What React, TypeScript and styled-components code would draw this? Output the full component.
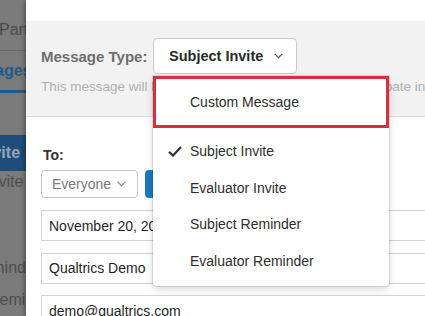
import React from "react";
import styled, { createGlobalStyle } from "styled-components";

const GlobalStyle = createGlobalStyle`
  html, body { margin: 0; padding: 0; background: #fff; overflow: hidden; }
  body { font-family: "Liberation Sans", Arial, sans-serif; }
  * { box-sizing: border-box; }
`;

const Page = styled.div`
  display: flex;
  width: 425px;
  height: 316px;
  overflow: hidden;
`;

/* ---------- dimmed page behind the modal ---------- */
const Backdrop = styled.aside`
  width: 26px;
  flex-shrink: 0;
  background: #7b7b7b;
  overflow: hidden;
  display: flex;
  flex-direction: column;
`;

const BackRow = styled.div<{ $h: number; $bg?: string; $line?: string; $pt?: number }>`
  height: ${(p) => p.$h}px;
  flex-shrink: 0;
  display: flex;
  align-items: center;
  padding-top: ${(p) => p.$pt ?? 0}px;
  background: ${(p) => p.$bg ?? "transparent"};
  border-bottom: ${(p) => p.$line ?? "none"};
  white-space: nowrap;
`;

const BackText = styled.span<{ $x: number; $color: string; $bold?: boolean }>`
  margin-left: ${(p) => p.$x}px;
  color: ${(p) => p.$color};
  font-size: 16px;
  font-weight: ${(p) => (p.$bold ? 700 : 400)};
  flex-shrink: 0;
`;

/* ---------- modal ---------- */
const Modal = styled.main`
  flex: 1;
  min-width: 0;
  position: relative;
  background: #fff;
  box-shadow: -2px 0 4px rgba(0, 0, 0, 0.3);
  display: flex;
  flex-direction: column;
`;

const TopStrip = styled.div`
  height: 21px;
  flex-shrink: 0;
`;

const Header = styled.section`
  height: 96px;
  flex-shrink: 0;
  background: #f2f2f2;
  border-bottom: 1px solid #dedede;
  padding: 17px 0 0 15px;
  overflow: visible;
`;

const TypeRow = styled.div`
  display: flex;
  align-items: center;
  height: 36px;
`;

const TypeLabel = styled.span`
  width: 112px;
  flex-shrink: 0;
  font-size: 15px;
  font-weight: 700;
  color: #6f6f6f;
`;

const TypeSelect = styled.div`
  position: relative;
  display: flex;
  align-items: center;
  gap: 11px;
  height: 36px;
  padding: 0 13px 0 15px;
  background: #fff;
  border: 1px solid #c9c9c9;
  border-radius: 4px;
  font-size: 14.5px;
  font-weight: 700;
  color: #2a2a2a;
  white-space: nowrap;
`;

const Description = styled.p`
  margin: 5px 0 0;
  font-size: 13.5px;
  line-height: 16px;
  color: #b0b0b0;
  white-space: nowrap;
`;

const Menu = styled.ul`
  position: absolute;
  top: 37px;
  left: -1px;
  width: 236px;
  height: 210px;
  margin: 0;
  padding: 0;
  list-style: none;
  background: #fff;
  border-radius: 0 0 3px 3px;
  box-shadow: 0 0 0 1px rgba(0, 0, 0, 0.1), 0 3px 8px rgba(0, 0, 0, 0.16);
  z-index: 10;
  font-size: 14px;
  font-weight: 400;
  color: #2e2e2e;
`;

const HighlightItem = styled.li`
  height: 52px;
  display: flex;
  align-items: center;
  padding-left: 34px;
  border: 3px solid #d2323c;
`;

const MenuItem = styled.li<{ $first?: boolean }>`
  height: 36.5px;
  margin-top: ${(p) => (p.$first ? 5 : 0)}px;
  display: flex;
  align-items: center;
  padding-left: 15px;
`;

const CheckSlot = styled.span`
  width: 22px;
  flex-shrink: 0;
  display: flex;
  align-items: center;
`;

/* ---------- body ---------- */
const Body = styled.section`
  padding: 30px 0 0 15px;
  display: flex;
  flex-direction: column;
`;

const ToLabel = styled.span`
  font-size: 14px;
  line-height: 16px;
  font-weight: 700;
  color: #333;
  padding-left: 2px;
`;

const Controls = styled.div`
  display: flex;
  gap: 7px;
  margin-top: 7px;
`;

const SmallSelect = styled.div`
  width: 97px;
  height: 28px;
  display: flex;
  align-items: center;
  justify-content: space-between;
  padding: 0 11px 0 10px;
  border: 1px solid #c4c4c4;
  border-radius: 4px;
  font-size: 14px;
  color: #7a7a7a;
`;

const BlueButton = styled.div`
  width: 120px;
  height: 28px;
  background: #1b79c3;
  border-radius: 4px;
`;

const Fields = styled.div`
  display: flex;
  flex-direction: column;
  gap: 11.5px;
  margin-top: 12px;
`;

const Field = styled.div`
  width: 420px;
  height: 31px;
  flex-shrink: 0;
  display: flex;
  align-items: center;
  padding-left: 7px;
  border: 1px solid #d2d2d2;
  background: #fff;
  font-size: 14px;
  color: #1f1f1f;
  white-space: nowrap;
`;

const Chevron = ({ color = "#666" }: { color?: string }) => (
  <svg width="9" height="6" viewBox="0 0 9 6" fill="none">
    <polyline points="0.7,0.8 4.5,4.6 8.3,0.8" stroke={color} strokeWidth="1.2" />
  </svg>
);

const Check = () => (
  <svg width="14" height="11" viewBox="0 0 14 11" fill="none">
    <path d="M1 5.8 L5 9.6 L13 1" stroke="#333" strokeWidth="2.2" />
  </svg>
);

export default function App() {
  return (
    <>
      <GlobalStyle />
      <Page>
        <Backdrop>
          <BackRow $h={51} $pt={10} $line="1px solid #6a6a6a">
            <BackText $x={-1} $color="#4a4a4a">Participants</BackText>
          </BackRow>
          <BackRow $h={42} $pt={1} $line="3px solid #1c5b8f">
            <BackText $x={-45} $color="#1d5a8c" $bold>Messages</BackText>
          </BackRow>
          <BackRow $h={42} />
          <BackRow $h={36} $bg="#1e4d7b">
            <BackText $x={-84} $color="#95a7b9" $bold>Subject Invite</BackText>
          </BackRow>
          <BackRow $h={22}>
            <BackText $x={-87} $color="#4e4e4e">Evaluator Invite</BackText>
          </BackRow>
          <BackRow $h={64} />
          <BackRow $h={22}>
            <BackText $x={-87} $color="#4e4e4e">Subject Reminder</BackText>
          </BackRow>
          <BackRow $h={10} />
          <BackRow $h={22}>
            <BackText $x={-84} $color="#4e4e4e">Evaluator Reminder</BackText>
          </BackRow>
        </Backdrop>

        <Modal>
          <TopStrip />
          <Header>
            <TypeRow>
              <TypeLabel>Message Type:</TypeLabel>
              <TypeSelect>
                Subject Invite
                <Chevron color="#555" />
                <Menu>
                  <HighlightItem>Custom Message</HighlightItem>
                  <MenuItem $first>
                    <CheckSlot>
                      <Check />
                    </CheckSlot>
                    Subject Invite
                  </MenuItem>
                  <MenuItem>
                    <CheckSlot />
                    Evaluator Invite
                  </MenuItem>
                  <MenuItem>
                    <CheckSlot />
                    Subject Reminder
                  </MenuItem>
                  <MenuItem>
                    <CheckSlot />
                    Evaluator Reminder
                  </MenuItem>
                </Menu>
              </TypeSelect>
            </TypeRow>
            <Description>
              This message will be emailed to all the people who participate in this project.
            </Description>
          </Header>

          <Body>
            <ToLabel>To:</ToLabel>
            <Controls>
              <SmallSelect>
                Everyone
                <Chevron color="#8a8a8a" />
              </SmallSelect>
              <BlueButton />
            </Controls>
            <Fields>
              <Field>November 20, 2019 09:00 AM</Field>
              <Field>Qualtrics Demo</Field>
              <Field>demo@qualtrics.com</Field>
            </Fields>
          </Body>
        </Modal>
      </Page>
    </>
  );
}
